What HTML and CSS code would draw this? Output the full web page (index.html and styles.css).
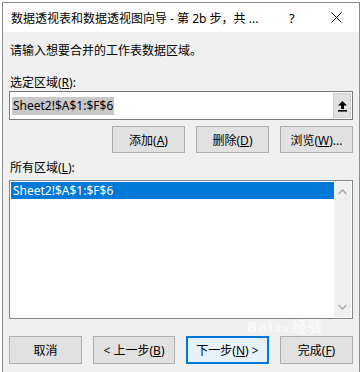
FILE: index.html
```html
<!DOCTYPE html>
<html lang="zh-CN">
<head>
  <meta charset="UTF-8">
  <title>数据透视表和数据透视图向导</title>
  <link rel="stylesheet" href="styles.css">
</head>
<body>
  <div class="dialog">
    <div class="titlebar">
      <span class="title">数据透视表和数据透视图向导 - 第 2b 步，共 ...</span>
      <span class="help">?</span>
      <svg class="close" width="11" height="11" viewBox="0 0 11 11">
        <path d="M0.5 0.5 L10.5 10.5 M10.5 0.5 L0.5 10.5" stroke="#000" stroke-width="1"/>
      </svg>
    </div>

    <div class="content">
      <div class="prompt">请输入想要合并的工作表数据区域。</div>

      <div class="label label-range">选定区域(<u>R</u>):</div>
      <div class="range-input">
        <span class="selected-text">Sheet2!$A$1:$F$6</span>
        <span class="collapse-btn">
          <svg width="11" height="12" viewBox="0 0 11 12">
            <path d="M5.5 1 L10 5.5 L7 5.5 L7 9 L4 9 L4 5.5 L1 5.5 Z" fill="#000"/>
            <rect x="1" y="10" width="9" height="1.6" fill="#000"/>
          </svg>
        </span>
      </div>

      <div class="btn-row">
        <button class="btn">添加(<u>A</u>)</button>
        <button class="btn">删除(<u>D</u>)</button>
        <button class="btn">浏览(<u>W</u>)...</button>
      </div>

      <div class="label label-all">所有区域(<u>L</u>):</div>
      <div class="list">
        <div class="list-items">
          <div class="list-item selected">Sheet2!$A$1:$F$6</div>
        </div>
        <div class="scrollbar">
          <svg width="9" height="6" viewBox="0 0 9 6"><path d="M0.5 5 L4.5 1 L8.5 5" fill="none" stroke="#a6a6a6" stroke-width="1.3"/></svg>
          <svg width="9" height="6" viewBox="0 0 9 6"><path d="M0.5 1 L4.5 5 L8.5 1" fill="none" stroke="#a6a6a6" stroke-width="1.3"/></svg>
        </div>
      </div>

      <div class="footer">
        <button class="btn btn-cancel">取消</button>
        <button class="btn btn-back">&lt; 上一步(<u>B</u>)</button>
        <button class="btn btn-next">下一步(<u>N</u>) &gt;</button>
        <button class="btn btn-finish">完成(<u>F</u>)</button>
      </div>
    </div>

    <div class="watermark">Bai<span class="wm-du">du</span>经验</div>
  </div>
</body>
</html>
```

FILE: styles.css
```css
body {
  margin: 0;
  background: #ffffff;
  font-family: "Noto Sans", "Noto Sans CJK SC", sans-serif;
  font-size: 12px;
  color: #000;
  overflow: hidden;
}
.dialog {
  position: relative;
  margin: 2px 0 0 2px;
  width: 358px;
  height: 372px;
  box-sizing: border-box;
  border: 1px solid #8c8c8c;
  border-bottom: none;
  background: #f0f0f0;
}
.titlebar {
  height: 29px;
  background: #fff;
  display: flex;
  align-items: center;
  padding-left: 8px;
}
.title {
  width: 278px;
  white-space: nowrap;
  font-size: 12px;
}
.help {
  font-size: 13px;
  width: 42px;
}
.close {
  margin-left: 0;
}
.content {
  padding: 0 6px 0 6px;
}
.prompt {
  margin-top: 10px;
  line-height: 18px;
  padding-left: 1px;
}
.label {
  line-height: 16px;
  padding-left: 1px;
}
.label-range {
  margin-top: 15px;
}
.range-input {
  height: 29px;
  box-sizing: border-box;
  border: 1px solid #7a7a7a;
  background: #fff;
  display: flex;
  align-items: center;
  justify-content: space-between;
  padding: 0 1px 0 2px;
}
.selected-text {
  background: #c8c8c8;
  line-height: 18px;
  padding: 0 1px;
}
.collapse-btn {
  width: 18px;
  height: 25px;
  box-sizing: border-box;
  background: #e1e1e1;
  border: 1px solid #d0d0d0;
  display: flex;
  align-items: center;
  justify-content: center;
}
.btn-row {
  margin-top: 6px;
  display: flex;
  justify-content: flex-end;
  gap: 11px;
}
.btn {
  width: 73px;
  height: 27px;
  box-sizing: border-box;
  background: #e1e1e1;
  border: 1px solid #adadad;
  font-family: "Noto Sans", "Noto Sans CJK SC", sans-serif;
  font-size: 12px;
  color: #000;
  padding: 0;
}
.label-all {
  margin-top: 7px;
}
.list {
  margin-top: 4px;
  height: 139px;
  box-sizing: border-box;
  border: 1px solid #828790;
  background: #fff;
  display: flex;
  padding: 1px;
}
.list-items {
  flex: 1;
}
.list-item {
  line-height: 17px;
  padding-left: 2px;
}
.list-item.selected {
  background: #0078d7;
  color: #fff;
}
.scrollbar {
  width: 17px;
  background: #f0f0f0;
  display: flex;
  flex-direction: column;
  justify-content: space-between;
  align-items: center;
  padding: 7px 0 7px;
}
.footer {
  margin-top: 17px;
  display: flex;
  justify-content: space-between;
}
.footer .btn {
  height: 28px;
}
.btn-back {
  width: 82px;
}
.btn.btn-next {
  width: 83px;
  border: 2px solid #0078d7;
  background: #e5f1fb;
}
.watermark {
  position: absolute;
  left: 244px;
  top: 314px;
  font-size: 15px;
  line-height: 18px;
  font-weight: bold;
  color: rgba(255, 255, 255, 0.6);
  letter-spacing: 1px;
  pointer-events: none;
}
.wm-du {
  font-size: 11px;
  margin-right: 2px;
}
```
